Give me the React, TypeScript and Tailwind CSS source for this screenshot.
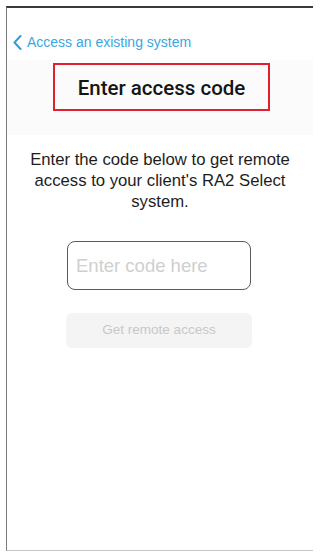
import React from 'react';

// "Enter access code" screen of the remote-access flow, shown inside a thin device frame.

function Chevron() {
  return (
    <svg width="9" height="15" viewBox="0 0 9 15" className="shrink-0">
      <path d="M7.5 1 L1.5 7.5 L7.5 14" fill="none" stroke="#2f9fe0" strokeWidth="2" strokeLinecap="round" strokeLinejoin="round" />
    </svg>
  );
}

export default function App() {
  return (
    <div className="min-h-[557px] bg-white pl-[6px] pt-[6px] font-['Liberation_Sans',Arial,sans-serif]">
      <div className="flex h-[545px] w-[307px] flex-col border-t-2 border-l border-b border-t-[#3a3a3a] border-l-[#7a7a7a] border-b-[#c4c4c4]">
        <button className="mt-[25px] flex h-[18px] items-center gap-[5px] pl-[6px] text-left text-[14px] text-[#3aa6e2]">
          <Chevron />
          <span>Access an existing system</span>
        </button>

        <div className="mt-[9px] h-[75px] bg-[#fbfbfb] pt-[3px]">
          <div className="ml-[46px] flex h-[48px] w-[217px] items-center justify-center border-2 border-[#e0202e] pt-[3px]">
            <span className="font-['Roboto','Liberation_Sans',sans-serif] text-[20.5px] font-medium text-[#151515]">
              Enter access code
            </span>
          </div>
        </div>

        <p className="mt-[14px] px-[6px] text-center text-[16.7px] leading-[21px] text-[#1d1d1d]">
          Enter the code below to get remote access to your client's RA2 Select system.
        </p>

        <div className="mt-[29px] flex flex-col items-center pr-[2px]">
          <input
            placeholder="Enter code here"
            className="h-[49px] w-[184px] rounded-[8px] border-[1.5px] border-[#5a5a5a] px-[8px] text-[18.5px] text-[#333] outline-none placeholder:text-[#cfcfcf]"
          />
          <button className="mt-[23px] h-[35px] w-[186px] rounded-[6px] bg-[#f4f4f4] text-[13.5px] text-[#c8c8c8]">
            Get remote access
          </button>
        </div>
      </div>
    </div>
  );
}
